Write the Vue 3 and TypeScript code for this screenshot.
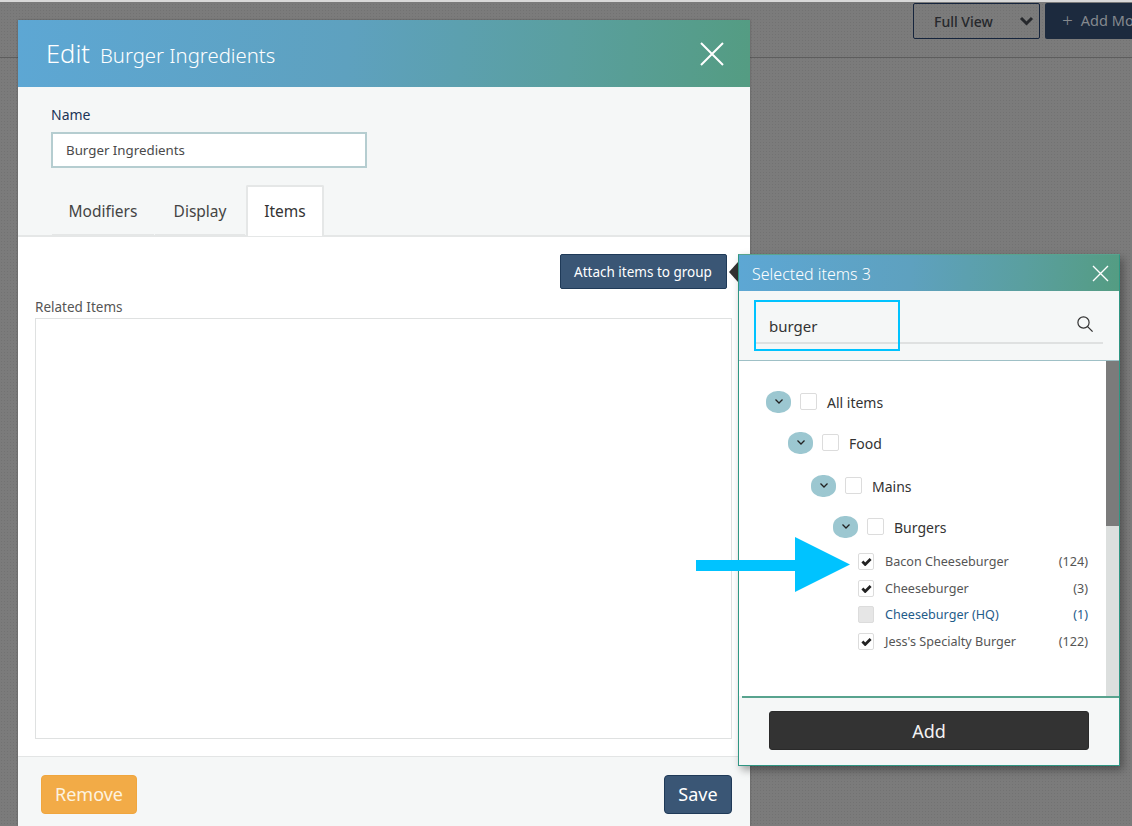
<script setup lang="ts">
interface Group { label: string; indent: number; height: number }
interface Leaf { label: string; count: string; state: 'checked' | 'disabled' }

const groups: Group[] = [
  { label: 'All items', indent: 0, height: 41 },
  { label: 'Food', indent: 22, height: 41 },
  { label: 'Mains', indent: 45, height: 45 },
  { label: 'Burgers', indent: 67, height: 37 },
]
const leaves: Leaf[] = [
  { label: 'Bacon Cheeseburger', count: '(124)', state: 'checked' },
  { label: 'Cheeseburger', count: '(3)', state: 'checked' },
  { label: 'Cheeseburger (HQ)', count: '(1)', state: 'disabled' },
  { label: "Jess's Specialty Burger", count: '(122)', state: 'checked' },
]
const tabs = ['Modifiers', 'Display', 'Items']
</script>

<template>
  <div class="page">
    <header class="topbar">
      <div class="view-select">
        <span>Full View</span>
        <svg width="15" height="10" viewBox="0 0 15 10"><path d="M2 2l5.500 5.500L13 2" fill="none" stroke="#26282c" stroke-width="3" /></svg>
      </div>
      <div class="add-mod"><span class="plus">+</span>Add Modifier</div>
    </header>

    <section class="modal">
      <div class="modal-head">
        <span class="edit">Edit</span>
        <span class="modal-name">Burger Ingredients</span>
        <svg class="close" width="26" height="26" viewBox="0 0 26 26"><path d="M2 2l22 22M24 2L2 24" stroke="#fff" stroke-width="2" fill="none" /></svg>
      </div>
      <div class="name-area">
        <label class="name-label">Name</label>
        <div class="name-input">Burger Ingredients</div>
      </div>
      <nav class="tabs">
        <div v-for="t in tabs" :key="t" class="tab" :class="{ active: t === 'Items', ['tab-' + t.toLowerCase()]: true }">{{ t }}</div>
      </nav>
      <div class="content">
        <div class="attach-row"><button class="attach">Attach items to group</button></div>
        <div class="related-label">Related Items</div>
        <div class="related-box"></div>
      </div>
      <footer class="modal-foot">
        <button class="remove">Remove</button>
        <button class="save">Save</button>
      </footer>
    </section>

    <div class="pointer"></div>

    <aside class="popup">
      <div class="popup-head">
        <span class="popup-title">Selected items 3</span>
        <svg width="17" height="17" viewBox="0 0 17 17"><path d="M1 1l15 15M16 1L1 16" stroke="#fff" stroke-width="1.400" fill="none" /></svg>
      </div>
      <div class="search-area">
        <div class="search-line">
          <span class="search-text">burger</span>
          <svg width="18" height="18" viewBox="0 0 18 18"><circle cx="7.500" cy="7.500" r="5.600" fill="none" stroke="#333" stroke-width="1.200" /><path d="M11.600 11.600l5 5" stroke="#333" stroke-width="1.300" /></svg>
        </div>
        <div class="highlight"></div>
      </div>
      <div class="list">
        <div class="tree">
          <div v-for="g in groups" :key="g.label" class="group" :style="{ paddingLeft: g.indent + 'px', height: g.height + 'px' }">
            <span class="toggle">
              <svg width="10" height="7" viewBox="0 0 10 7"><path d="M1.500 1.500L5 5l3.500-3.500" fill="none" stroke="#222" stroke-width="1.300" /></svg>
            </span>
            <span class="box"></span>
            <span class="group-label">{{ g.label }}</span>
          </div>
          <div class="leaves">
            <div v-for="l in leaves" :key="l.label" class="leaf" :class="{ off: l.state === 'disabled' }">
              <span class="box small" :class="{ dis: l.state === 'disabled' }">
                <svg v-if="l.state === 'checked'" width="11" height="9" viewBox="0 0 11 9"><path d="M1.400 4.600l2.800 2.800L9.600 2" fill="none" stroke="#222" stroke-width="2.800" /></svg>
              </span>
              <span class="leaf-label">{{ l.label }}</span>
              <span class="leaf-count">{{ l.count }}</span>
            </div>
          </div>
        </div>
        <div class="scroll"><div class="thumb"></div></div>
      </div>
      <div class="popup-foot"><button class="add">Add</button></div>
    </aside>

    <svg class="callout" width="154" height="55" viewBox="0 0 154 55"><path d="M0 23h99V0l55 27.500L99 55V34H0z" fill="#00c3ff" /></svg>
  </div>
</template>

<style>
html, body { margin: 0; padding: 0; }
</style>

<style scoped>
.page {
  position: relative;
  width: 1132px;
  height: 826px;
  overflow: hidden;
  background-color: #7b7b7b;
  background-image: radial-gradient(#727272 .6px, transparent .8px);
  background-size: 3px 3px;
  font-family: "Noto Sans", "Open Sans", sans-serif;
  color: #333;
}
button { font-family: inherit; cursor: pointer; }

.topbar {
  box-sizing: border-box;
  height: 58px;
  width: 1200px;
  padding: 0 0 0 913px;
  display: flex;
  align-items: flex-start;
  gap: 5px;
  border-top: 2px solid #d9d9d9;
  border-bottom: 1px solid #5d5d5d;
}
.view-select {
  box-sizing: border-box;
  width: 127px;
  height: 36px;
  margin-top: 1px;
  border: 1px solid #15243c;
  border-radius: 2px;
  display: flex;
  align-items: center;
  justify-content: space-between;
  padding: 0 5px 0 20px;
  font-size: 14px;
  font-weight: 500;
  color: #26282c;
}
.add-mod {
  box-sizing: border-box;
  width: 130px;
  height: 36px;
  margin-top: 1px;
  background: #1c2a3e;
  border-radius: 2px;
  color: #85898e;
  font-size: 14.500px;
  display: flex;
  align-items: center;
  padding: 0 0 3px 17px;
  white-space: nowrap;
}
.plus { font-size: 19px; margin-right: 8px; font-weight: 300; }

.modal {
  position: absolute;
  left: 18px;
  top: 20px;
  width: 732px;
  height: 806px;
  background: #f5f7f7;
  display: flex;
  flex-direction: column;
  box-shadow: 0 0 2px rgba(0, 0, 0, .3);
}
.modal-head {
  height: 67px;
  flex: none;
  box-sizing: border-box;
  padding: 0 25px 0 28px;
  display: flex;
  align-items: center;
  color: #fff;
  background: linear-gradient(95deg, #5da7d4 0%, #5ea1bf 45%, #5a9f9f 75%, #549c82 100%);
}
.edit { font-size: 25.500px; font-weight: 300; margin-right: 10px; margin-top: -2px; }
.modal-name { font-size: 20.300px; font-weight: 300; flex: 1; padding-top: 3px; }
.name-area { height: 98px; flex: none; box-sizing: border-box; padding: 18px 0 0 33px; }
.name-label { display: block; font-size: 14px; line-height: 19px; color: #1c3557; margin-bottom: 8px; }
.name-input {
  box-sizing: border-box;
  width: 316px;
  height: 36px;
  background: #fff;
  border: 2px solid #b5cdd0;
  padding-left: 13px;
  font-size: 13.300px;
  line-height: 32px;
  color: #4a4a4a;
}
.tabs {
  height: 52px;
  flex: none;
  box-sizing: border-box;
  display: flex;
  padding-left: 34px;
  gap: 1px;
  border-bottom: 2px solid #e5e7e7;
}
.tab {
  box-sizing: border-box;
  height: 50px;
  border-bottom: 2px solid #e5e7e7;
  margin-top: 1px;
  text-align: center;
  font-size: 15.500px;
  line-height: 50px;
  color: #444;
}
.tab-modifiers { width: 102px; }
.tab-display { width: 90px; }
.tab-items { width: 78px; }
.tab.active {
  height: 51px;
  margin-top: 0;
  background: #fff;
  border: 2px solid #e5e7e7;
  border-bottom: 0;
  border-radius: 2px 2px 0 0;
  color: #333;
  line-height: 49px;
}
.content {
  height: 520px;
  flex: none;
  box-sizing: border-box;
  background: #fff;
  border-bottom: 1px solid #e3e5e5;
  padding: 17px 18px 0 17px;
}
.attach-row { display: flex; justify-content: flex-end; padding-right: 5px; }
.attach {
  box-sizing: border-box;
  width: 167px;
  height: 35px;
  background: #3a5675;
  border: 1px solid #1f3a58;
  border-radius: 2px;
  color: #fff;
  font-size: 13.500px;
  padding: 0 1px 0 0;
}
.related-label { margin-top: 9px; font-size: 13.500px; line-height: 19px; color: #555; }
.related-box {
  box-sizing: border-box;
  margin-top: 1px;
  height: 421px;
  border: 1px solid #dfe1e1;
  background: #fff;
}
.modal-foot {
  flex: 1;
  display: flex;
  justify-content: space-between;
  align-items: flex-start;
  padding: 18px 18px 0 23px;
}
.remove, .save {
  height: 39px;
  border-radius: 4px;
  font-size: 18px;
  padding: 0 0 2px;
  color: #fff;
}
.remove { width: 96px; background: #f2ab47; border: 1px solid #f0a63e; color: #fdf3e0; }
.save { width: 68px; background: #3a5675; border: 1px solid #1f3a58; }

.pointer {
  position: absolute;
  left: 729px;
  top: 262px;
  width: 0;
  height: 0;
  border-style: solid;
  border-width: 10px 9px 10px 0;
  border-color: transparent #333 transparent transparent;
}

.popup {
  position: absolute;
  left: 738px;
  top: 254px;
  width: 382px;
  height: 512px;
  box-sizing: border-box;
  border: 1px solid #2f9683;
  border-top-color: #58a38e;
  background: #f5f7f7;
  display: flex;
  flex-direction: column;
  box-shadow: 3px 4px 8px rgba(0, 0, 0, .35);
}
.popup-head {
  height: 36px;
  flex: none;
  box-sizing: border-box;
  padding: 0 10px 0 13px;
  display: flex;
  align-items: center;
  justify-content: space-between;
  color: #fff;
  font-size: 16px;
  font-weight: 300;
  background: linear-gradient(95deg, #5da7d4 0%, #5ea1bf 45%, #5a9f9f 75%, #549c82 100%);
}
.popup-title { padding-top: 2px; }
.search-area {
  position: relative;
  height: 70px;
  flex: none;
  box-sizing: border-box;
  padding: 14px 16px 0 17px;
  border-bottom: 1px solid #9fc0c6;
}
.search-line {
  box-sizing: border-box;
  height: 39px;
  display: flex;
  align-items: center;
  justify-content: space-between;
  padding: 1px 9px 0 13px;
  border-bottom: 2px solid #dfe1e1;
}
.search-text { font-size: 15px; color: #333; padding-top: 3px; }
.highlight {
  position: absolute;
  left: 15px;
  top: 9px;
  width: 146px;
  height: 51px;
  box-sizing: border-box;
  border: 2px solid #00c3ff;
}
.list {
  position: relative;
  flex: 1;
  min-height: 0;
  background: #fff;
  display: flex;
}
.tree { flex: 1; box-sizing: border-box; padding: 20px 18px 0 27px; }
.group { display: flex; align-items: center; box-sizing: border-box; }
.toggle {
  width: 25px;
  height: 22px;
  border-radius: 46%;
  background-color: #b4d8df;
  background-image: radial-gradient(#7fb3bf .6px, transparent .8px);
  background-size: 2px 2px;
  display: flex;
  align-items: center;
  justify-content: center;
  margin-right: 9px;
  flex: none;
}
.box {
  box-sizing: border-box;
  width: 17px;
  height: 17px;
  border: 1px solid #dcdcdc;
  border-radius: 2px;
  background: #fff;
  flex: none;
  display: flex;
  align-items: center;
  justify-content: center;
}
.box.small { width: 16px; height: 17px; margin-right: 11px; }
.box.dis { background: #e6e6e6; }
.group-label { margin-left: 10px; font-size: 14px; color: #333; padding-top: 1px; }
.leaves { padding: 3px 0 0 92px; }
.leaf {
  display: flex;
  align-items: center;
  height: 26.700px;
  font-size: 12.600px;
  color: #555;
}
.leaf.off { color: #1f5c8a; }
.leaf-label { flex: 1; white-space: nowrap; }
.scroll { width: 13px; flex: none; background: #dcdfde; }
.thumb { height: 165px; background: #7b7b7b; }
.popup-foot {
  height: 69px;
  flex: none;
  box-sizing: border-box;
  margin-left: 3px;
  padding: 13px 30px 0 27px;
  border-top: 2px solid #58a38e;
}
.add {
  display: block;
  width: 100%;
  height: 39px;
  background: #333;
  border: 1px solid #2a2a2a;
  border-radius: 3px;
  color: #f2f2f2;
  font-size: 18px;
  padding: 0;
}
.callout { position: absolute; left: 696px; top: 537px; }
</style>
